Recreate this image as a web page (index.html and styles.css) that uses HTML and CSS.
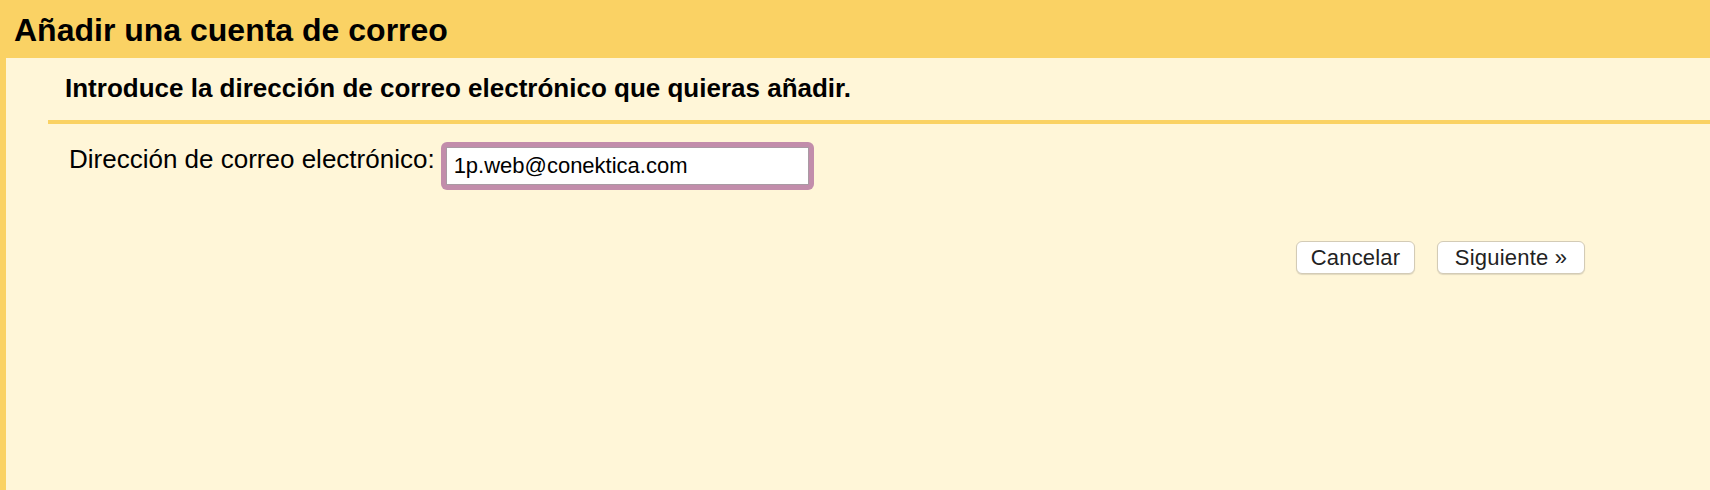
FILE: index.html
```html
<!DOCTYPE html>
<html lang="es">
<head>
<meta charset="utf-8">
<title>Añadir una cuenta de correo</title>
<link rel="stylesheet" href="styles.css">
</head>
<body>
<div class="page">
  <header class="header">
    <h1 class="title">Añadir una cuenta de correo</h1>
  </header>
  <main class="content">
    <h2 class="subtitle">Introduce la dirección de correo electrónico que quieras añadir.</h2>
    <div class="divider"></div>
    <div class="field-row">
      <label class="label" for="email">Dirección de correo electrónico:</label>
      <span class="focus-ring">
        <input class="input" id="email" type="text" value="1p.web@conektica.com">
      </span>
    </div>
    <div class="actions">
      <button class="btn btn-cancel" type="button">Cancelar</button>
      <button class="btn btn-next" type="button">Siguiente »</button>
    </div>
  </main>
</div>
</body>
</html>
```
FILE: styles.css
```css
* { box-sizing: border-box; }
html, body {
  margin: 0;
  padding: 0;
  height: 100%;
}
body {
  font-family: "Liberation Sans", Arial, sans-serif;
  color: #000;
  background: #fff6d8;
}
.page {
  display: flex;
  flex-direction: column;
  height: 490px;
}
.header {
  background: #fad264;
  height: 58px;
  padding: 3px 0 0 14px;
  flex: none;
}
.title {
  margin: 0;
  font-size: 32px;
  line-height: 55px;
  font-weight: bold;
}
.content {
  flex: 1;
  background: #fff6d8;
  border-left: 6px solid #fad264;
  display: flex;
  flex-direction: column;
}
.subtitle {
  margin: 15px 0 0 59px;
  font-size: 26px;
  line-height: 30px;
  font-weight: bold;
}
.divider {
  height: 4px;
  background: #fad264;
  margin: 17px 0 0 42px;
}
.field-row {
  display: flex;
  align-items: flex-start;
  margin: 18px 0 0 63px;
}
.label {
  font-size: 26px;
  line-height: 30px;
  margin-top: 2px;
  margin-right: 6px;
  white-space: nowrap;
}
.focus-ring {
  display: block;
  padding: 5px;
  background: #c28dab;
  border-radius: 6px;
}
.input {
  display: block;
  width: 363px;
  height: 38px;
  margin: 0;
  border: 1px solid #a99aa3;
  border-radius: 0;
  background: #fff;
  padding: 0 7px;
  font-family: "Liberation Sans", Arial, sans-serif;
  font-size: 22px;
  color: #000;
  outline: none;
}
.actions {
  display: flex;
  justify-content: flex-end;
  gap: 22px;
  margin-top: 51px;
  padding-right: 125px;
}
.btn {
  height: 33px;
  padding: 0;
  background: #fff;
  border: 1px solid #d3cbb6;
  border-radius: 6px;
  box-shadow: 0 1px 1px rgba(0, 0, 0, 0.12);
  font-family: "Liberation Sans", Arial, sans-serif;
  font-size: 22px;
  color: #222;
  letter-spacing: 0.2px;
}
.btn-cancel { width: 119px; }
.btn-next { width: 148px; }
```
